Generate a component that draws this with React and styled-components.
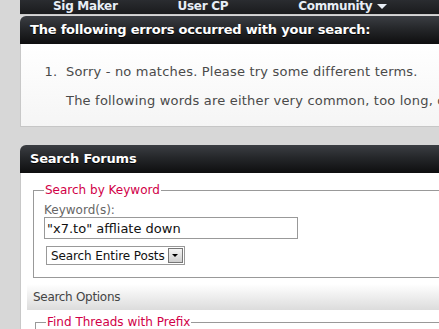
import React from 'react'
import styled, { createGlobalStyle } from 'styled-components'

const GlobalStyle = createGlobalStyle`
    html, body {
        margin: 0;
        padding: 0;
        background: #d7d7d7;
        overflow: hidden;
    }
    body {
        font-family: "DejaVu Sans", Verdana, sans-serif;
    }
`

export default function App() {
    return (
        <>
            <GlobalStyle />
            <Page>
                <NavBar>
                    <NavItem>Sig Maker</NavItem>
                    <NavItem>User CP</NavItem>
                    <NavItem>Community <Caret /></NavItem>
                </NavBar>

                <Panel>
                    <PanelHead>The following errors occurred with your search:</PanelHead>
                    <ErrorBody>
                        <ErrorList>
                            <li>
                                Sorry - no matches. Please try some different terms.
                                <ErrorNote>The following words are either very common, too long, or too short and were not included in your search:</ErrorNote>
                            </li>
                        </ErrorList>
                    </ErrorBody>
                </Panel>

                <Panel $gap>
                    <PanelHead>Search Forums</PanelHead>
                    <FormBody>
                        <Fieldset>
                            <Legend>Search by Keyword</Legend>
                            <Label>Keyword(s):</Label>
                            <TextInput defaultValue={'"x7.to" affliate down'} />
                            <Select>
                                <span>Search Entire Posts</span>
                                <SelectButton><Caret $dark /></SelectButton>
                            </Select>
                        </Fieldset>
                        <OptionsBar>Search Options</OptionsBar>
                        <Fieldset $small>
                            <Legend>Find Threads with Prefix</Legend>
                        </Fieldset>
                    </FormBody>
                </Panel>
            </Page>
        </>
    )
}

const Page = styled.div`
    width: 700px;
    padding-left: 20px;
    display: flex;
    flex-direction: column;
`

const NavBar = styled.div`
    height: 14px;
    background: linear-gradient(#2a2c30, #1a1b1d);
    display: flex;
    align-items: flex-start;
    padding-left: 33px;
    border-bottom: 1px solid #c9c9c9;
`

const NavItem = styled.div`
    font-family: "DejaVu Sans", Verdana, sans-serif;
    font-weight: bold;
    font-size: 12px;
    line-height: 12px;
    letter-spacing: -0.3px;
    color: #e8eef6;
    margin-right: 60px;
    display: flex;
    align-items: center;
    gap: 5px;
    &:nth-child(2) {
        margin-right: 70px;
    }
`

const Caret = styled.span`
    display: inline-block;
    width: 0;
    height: 0;
    border-left: ${p => p.$dark ? 3 : 5}px solid transparent;
    border-right: ${p => p.$dark ? 3 : 5}px solid transparent;
    border-top: ${p => p.$dark ? 3 : 5}px solid ${p => p.$dark ? '#000' : '#e8eef6'};
`

const Panel = styled.div`
    margin-top: ${p => p.$gap ? '18px' : '1px'};
    display: flex;
    flex-direction: column;
`

const PanelHead = styled.div`
    height: 28px;
    box-sizing: border-box;
    padding: 6px 10px 0;
    border-radius: 6px 6px 0 0;
    background: linear-gradient(#3b3e43, #25272a 45%, #0e0e0f);
    color: #fff;
    font-weight: bold;
    font-size: 13px;
    line-height: 16px;
    letter-spacing: -0.2px;
    text-shadow: 0 1px 0 #000;
`

const ErrorBody = styled.div`
    height: 83px;
    box-sizing: border-box;
    background: linear-gradient(#ffffff, #f5f5f5);
    border-left: 1px solid #c8c8c8;
    border-bottom: 1px solid #c6c6c6;
    padding-top: 20px;
`

const ErrorList = styled.ol`
    margin: 0;
    padding-left: 45px;
    color: #4a4a4a;
    font-size: 13px;
    line-height: 16px;
    letter-spacing: 0.2px;
    white-space: nowrap;
    & li::marker {
        content: counter(list-item) ".  ";
    }
`

const ErrorNote = styled.p`
    margin: 13px 0 0;
`

const FormBody = styled.div`
    background: #fff;
    border-left: 1px solid #c8c8c8;
    padding: 10px 0 20px 6px;
    display: flex;
    flex-direction: column;
`

const Fieldset = styled.fieldset`
    margin: ${p => p.$small ? '5px 0 0 8px' : '0 0 0 6px'};
    padding: 0 10px ${p => p.$small ? '20px' : '12px'};
    border: 1px solid #999;
    display: flex;
    flex-direction: column;
    align-items: flex-start;
`

const Legend = styled.legend`
    color: #d10047;
    font-size: 12px;
    padding: 0 1px;
    margin-top: 2px;
`

const Label = styled.label`
    color: #666;
    font-size: 12px;
    line-height: 14px;
    margin-top: 6px;
`

const TextInput = styled.input`
    width: 254px;
    height: 22px;
    box-sizing: border-box;
    margin-top: 0;
    border: 1px solid #999;
    padding: 0 2px;
    font-family: "DejaVu Sans", Verdana, sans-serif;
    font-size: 13px;
    color: #111;
    outline: none;
`

const Select = styled.div`
    margin: 7px 0 0 2px;
    height: 19px;
    box-sizing: border-box;
    border: 1px solid #999;
    display: flex;
    align-items: center;
    padding-left: 4px;
    gap: 3px;
    font-size: 12px;
    letter-spacing: -0.1px;
    color: #111;
`

const SelectButton = styled.div`
    width: 15px;
    height: 15px;
    margin-right: 1px;
    box-sizing: border-box;
    border: 1px solid #777;
    background: linear-gradient(#f4f4f4, #cfcfcf);
    display: flex;
    align-items: center;
    justify-content: center;
`

const OptionsBar = styled.div`
    margin-top: 6px;
    height: 26px;
    box-sizing: border-box;
    padding: 6px 6px 0;
    background: linear-gradient(#ffffff, #dcdcdc);
    color: #444;
    font-size: 12px;
    letter-spacing: -0.3px;
`
